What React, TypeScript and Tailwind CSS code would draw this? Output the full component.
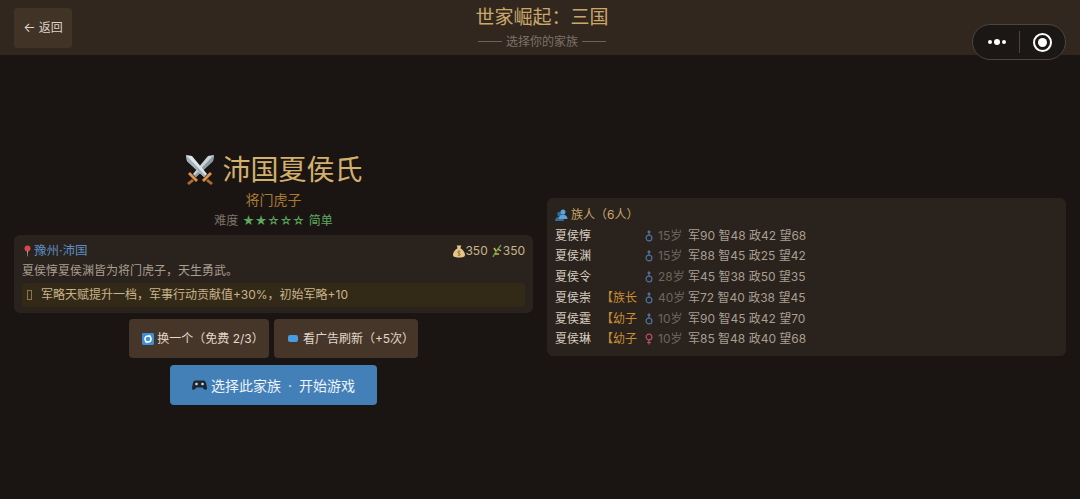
const FONT = "font-['Inter','Noto_Sans_CJK_SC',sans-serif]";

const MEMBERS = [
  { name: "夏侯惇", role: "", gender: "m", age: 15, stats: "军90 智48 政42 望68" },
  { name: "夏侯渊", role: "", gender: "m", age: 15, stats: "军88 智45 政25 望42" },
  { name: "夏侯令", role: "", gender: "m", age: 28, stats: "军45 智38 政50 望35" },
  { name: "夏侯崇", role: "【族长", gender: "m", age: 40, stats: "军72 智40 政38 望45" },
  { name: "夏侯霆", role: "【幼子", gender: "m", age: 10, stats: "军90 智45 政42 望70" },
  { name: "夏侯琳", role: "【幼子", gender: "f", age: 10, stats: "军85 智48 政40 望68" },
];

function Swords() {
  return (
    <svg width="32" height="32" viewBox="0 0 32 32" className="shrink-0">
      <path d="M30 1l-1 6L12 23l-3-3L24 2z" fill="#c9d3da" />
      <path d="M30 1l-1 6L12 23l-1.500-1.500z" fill="#8b99a3" />
      <path d="M2 1l1 6 17 16 3-3L8 2z" fill="#dfe6ea" />
      <path d="M2 1l1 6 17 16 1.500-1.500z" fill="#a5b1b9" />
      <path d="M6 18l8 8-2 2-8-8z" fill="#d9964f" />
      <path d="M26 18l-8 8 2 2 8-8z" fill="#d9964f" />
      <path d="M8 25l-5 4 2 2 5-4zM24 25l5 4-2 2-5-4z" fill="#b06a2e" />
    </svg>
  );
}

function Pin() {
  return (
    <svg width="7" height="12" viewBox="0 0 7 12" className="shrink-0">
      <circle cx="3.500" cy="3.500" r="3" fill="#d8464f" />
      <path d="M3 6h1l-.3 5.500h-.4z" fill="#b9b2aa" />
    </svg>
  );
}

function MoneyBag() {
  return (
    <svg width="12" height="14" viewBox="0 0 13 14" className="shrink-0">
      <path d="M4 1h5L8 4c3 1.500 5 4.500 5 7 0 2-1.500 3-6.500 3S0 13 0 11c0-2.500 2-5.500 5-7z" fill="#e6c58a" />
      <path d="M8 7.500C6.500 6.700 5 7.200 5 8.300s3 1 3 2.300-1.700 1.500-3 .8M6.500 6.300v6" stroke="#8a6a35" strokeWidth=".8" fill="none" />
    </svg>
  );
}

function Rice() {
  return (
    <svg width="11" height="14" viewBox="0 0 11 14" className="shrink-0">
      <path d="M1 13C3 9 5 6 9 1" stroke="#5c9a45" strokeWidth="1.500" fill="none" />
      <path d="M4 7l-2-3M6 5l3 2M3 10l4 0" stroke="#d6b14e" strokeWidth="1.500" fill="none" />
    </svg>
  );
}

function RefreshIcon() {
  return (
    <svg width="12" height="12" viewBox="0 0 13 13" className="shrink-0">
      <rect width="13" height="13" rx="1.500" fill="#3d8fd6" />
      <circle cx="6.500" cy="6.500" r="3.300" stroke="#fff" strokeWidth="1.600" fill="none" />
      <path d="M8 1.500l2 2-2.500.8zM5 11.500l-2-2 2.500-.8z" fill="#fff" />
    </svg>
  );
}

function Gamepad() {
  return (
    <svg width="15" height="12" viewBox="0 0 15 12" className="shrink-0">
      <path d="M3.500 1.500h8c1.500 0 2.300 1 2.700 3l.8 4.500c.2 1.800-2 2.500-3.200 1L10.500 8.500h-6L3.200 10c-1.200 1.500-3.400.8-3.200-1l.8-4.500c.4-2 1.200-3 2.700-3z" fill="#1c2730" />
      <circle cx="4.500" cy="5" r="1.300" fill="#d6dde2" />
      <circle cx="10.500" cy="5" r="1.300" fill="#d6dde2" />
    </svg>
  );
}

function Users() {
  return (
    <svg width="13" height="12" viewBox="0 0 13 12" className="shrink-0">
      <circle cx="4.500" cy="5" r="2.300" fill="#2f6d9e" />
      <path d="M0 12c0-3 2-4.500 4.500-4.500S9 9 9 12z" fill="#2f6d9e" />
      <circle cx="8" cy="3" r="2.500" fill="#5ba3d8" />
      <path d="M3.800 10c0-3 2-4.500 4.200-4.500S12.500 7 12.500 10z" fill="#5ba3d8" />
    </svg>
  );
}

function GenderMark({ gender }: { gender: string }) {
  if (gender === "m") {
    return (
      <svg width="13" height="12" viewBox="0 0 13 12" className="shrink-0" fill="none" stroke="#4f6f9c" strokeWidth="1.200">
        <circle cx="4" cy="8" r="2.900" />
        <path d="M4 5V1.200M2.600 2.500L4 1l1.400 1.500" />
      </svg>
    );
  }
  return (
    <svg width="13" height="12" viewBox="0 0 13 12" className="shrink-0" fill="none" stroke="#b4505f" strokeWidth="1.200">
      <circle cx="4" cy="4" r="2.900" />
      <path d="M4 7v4.500M2 9.500h4" />
    </svg>
  );
}

export default function App() {
  return (
    <div className={`${FONT} relative flex h-[499px] w-[1080px] flex-col overflow-hidden bg-[#1a1512]`}>
      <header className="flex h-[55px] shrink-0 flex-col items-center justify-center bg-[#32271f] pl-[4px]">
        <div className="absolute left-[14px] top-[8px] flex h-[40px] w-[58px] items-center justify-center gap-[3px] rounded bg-[#423327] text-[12px] text-[#ddd4c8]">
          <span className="text-[13px]">←</span>
          返回
        </div>
        <div className="text-[19px] leading-[24px] text-[#c9a86a]">世家崛起：三国</div>
        <div className="mt-[4px] flex items-center gap-[4px] text-[12px] leading-[16px] text-[#7d7268]">
          <span className="h-px w-[24px] bg-[#6b6158]" />
          选择你的家族
          <span className="h-px w-[24px] bg-[#6b6158]" />
        </div>
        <div className="absolute left-[972px] top-[24px] flex h-[36px] w-[94px] items-center rounded-full border border-[#4a4540] bg-[#1b1714]">
          <div className="flex w-[46px] items-center justify-center gap-[2px] pl-[2px]">
            <span className="size-[4px] rounded-full bg-white" />
            <span className="size-[6px] rounded-full bg-white" />
            <span className="size-[4px] rounded-full bg-white" />
          </div>
          <div className="h-[22px] w-px bg-[#4a4540]" />
          <div className="flex flex-1 items-center justify-center">
            <div className="flex size-[19px] items-center justify-center rounded-full border-2 border-white">
              <div className="size-[9px] rounded-full bg-white" />
            </div>
          </div>
        </div>
      </header>

      <main className="grid flex-1 grid-cols-2 items-center gap-[14px] px-[14px]">
        <section className="flex flex-col items-center">
          <div className="flex h-[42px] items-center gap-[6px]">
            <Swords />
            <h1 className="text-[28px] leading-[36px] text-[#d4b06e]">沛国夏侯氏</h1>
          </div>
          <div className="text-[14px] leading-[18px] text-[#a87a35]">将门虎子</div>
          <div className="mt-[3px] flex h-[18px] items-center gap-[4px] text-[12px] text-[#7d746a]">
            难度
            <span className="text-[#5fa85f]">★★☆☆☆</span>
            <span className="text-[#5fa85f]">简单</span>
          </div>

          <div className="mt-[5px] w-full rounded-md bg-[#2a221c] px-[8px] pb-[6px] pt-[7px]">
            <div className="flex items-center justify-between text-[12px] leading-[18px]">
              <span className="ml-[2px] flex items-center gap-[3px] text-[12.500px] text-[#5b8ec4]">
                <Pin />豫州·沛国
              </span>
              <span className="flex items-center text-[#c9b48c]">
                <MoneyBag />350
                <span className="w-[4px]" />
                <Rice />350
              </span>
            </div>
            <p className="mt-px text-[12px] leading-[20px] text-[#a89e92]">夏侯惇夏侯渊皆为将门虎子，天生勇武。</p>
            <div className="mt-[2px] flex h-[24px] items-center gap-[9px] rounded-sm bg-[#332917] px-[4px] text-[12px] text-[#c9b48c]">
              <span className="ml-[1px] inline-block h-[10px] w-[5px] border border-[#8a7550]" />
              军略天赋提升一档，军事行动贡献值+30%，初始军略+10
            </div>
          </div>

          <div className="mt-[6px] flex gap-[5px]">
            <button className="flex h-[39px] w-[140px] items-center justify-center gap-[3px] rounded-sm bg-[#46362a] pl-[8px] text-[12px] text-[#e0d8cc]">
              <RefreshIcon />换一个（免费 2/3）
            </button>
            <button className="flex h-[39px] w-[144px] items-center justify-center gap-[5px] rounded-sm bg-[#46362a] pl-[10px] text-[12px] text-[#e0d8cc]">
              <span className="h-[7px] w-[10px] rounded-[2px] bg-[#4a9be0]" />看广告刷新（+5次）
            </button>
          </div>
          <button className="mt-[7px] flex h-[40px] w-[207px] items-center justify-center gap-[4px] rounded bg-[#4480b8] text-[14px] text-[#eef3f7]">
            <Gamepad />
            <span>选择此家族<span className="mx-[3px]"> · </span>开始游戏</span>
          </button>
        </section>

        <section className="rounded-md bg-[#2a221c] px-[8px] pb-[6px] pt-[7px]">
          <div className="flex h-[20px] items-center gap-[3px] text-[12px] text-[#c9a86a]">
            <Users />族人（6人）
          </div>
          {MEMBERS.map((m) => (
            <div key={m.name} className="flex h-[20.800px] items-center text-[12px]">
              <span className="w-[46px] text-[#d8cfc2]">{m.name}</span>
              <span className="w-[44px] text-[#c98f35]">{m.role}</span>
              <GenderMark gender={m.gender} />
              <span className="w-[30px] text-[#6f665d]">{m.age}岁</span>
              <span className="text-[#a89e92]">{m.stats}</span>
            </div>
          ))}
        </section>
      </main>
    </div>
  );
}
